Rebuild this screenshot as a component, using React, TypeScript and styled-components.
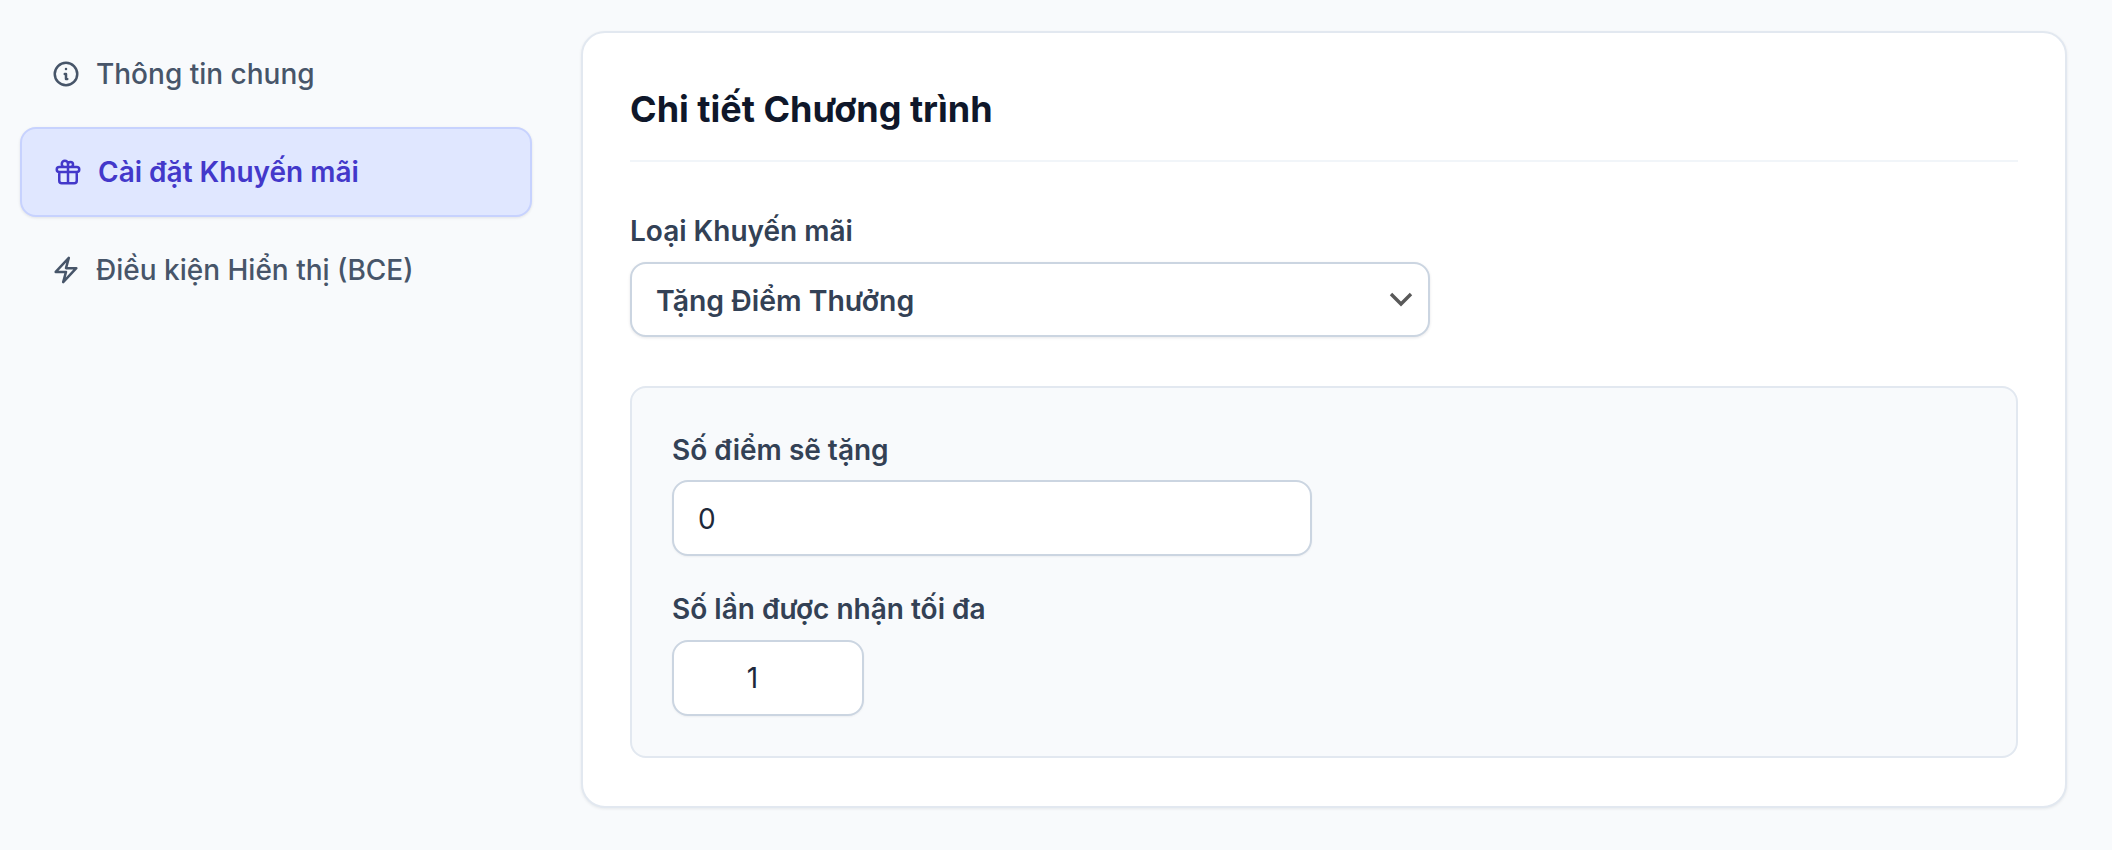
import React from "react"
import styled, { createGlobalStyle } from "styled-components"
import { HiOutlineInformationCircle, HiOutlineGift } from "react-icons/hi"
import { HiOutlineBolt } from "react-icons/hi2"

const GlobalStyle = createGlobalStyle`
    html, body {
        margin: 0;
        background-color: #f8fafc;
        font-family: Inter, "Noto Sans", sans-serif;
    }
`

const Page = styled.div`
    display: grid;
    grid-template-columns: 512px 1486px;
    column-gap: 49px;
    align-items: start;
    padding: 31px 0 0 20px;
    min-height: 819px;
`

const Sidebar = styled.nav`
    display: flex;
    flex-direction: column;
    gap: 8px;
    margin-top: -2px;
`

const NavItem = styled.a<{ $active?: boolean }>`
    display: flex;
    align-items: center;
    gap: 15px;
    height: 90px;
    box-sizing: border-box;
    padding: 0 31px;
    border-radius: 16px;
    font-size: 28px;
    font-weight: ${(p) => (p.$active ? 600 : 500)};
    color: ${(p) => (p.$active ? "#4338ca" : "#475569")};
    background-color: ${(p) => (p.$active ? "#e0e7ff" : "transparent")};
    border: ${(p) => (p.$active ? "2px solid #c7d2fe" : "none")};
    box-shadow: ${(p) => (p.$active ? "0 1px 3px rgba(15, 23, 42, 0.1)" : "none")};

    svg {
        flex-shrink: 0;
    }
`

const Card = styled.section`
    box-sizing: border-box;
    height: 777px;
    padding: 0 47px;
    background-color: #fff;
    border: 2px solid #e2e8f0;
    border-radius: 24px;
    box-shadow: 0 1px 3px rgba(15, 23, 42, 0.08);
`

const Title = styled.h2`
    margin: 0;
    padding: 55px 0 30px;
    font-size: 36px;
    line-height: 42px;
    font-weight: 700;
    color: #0f172a;
    border-bottom: 2px solid #f1f5f9;
`

const Field = styled.div`
    display: flex;
    flex-direction: column;
    align-items: flex-start;
`

const TopField = styled(Field)`
    margin-top: 49px;
`

const Label = styled.label<{ $tight?: boolean }>`
    font-size: 28px;
    line-height: 40px;
    font-weight: 600;
    color: #334155;
    margin-bottom: ${(p) => (p.$tight ? "10px" : "11px")};
`

const SelectWrap = styled.div`
    position: relative;
    width: 800px;
    height: 75px;

    svg {
        position: absolute;
        top: 26px;
        right: 17px;
        pointer-events: none;
    }
`

const Select = styled.select`
    appearance: none;
    box-sizing: border-box;
    width: 100%;
    height: 100%;
    padding: 2px 24px 0;
    font-family: inherit;
    font-size: 28.4px;
    font-weight: 600;
    color: #334155;
    background-color: #fff;
    border: 2px solid #cbd5e1;
    border-radius: 16px;
    box-shadow: 0 1px 3px rgba(15, 23, 42, 0.1);
`

const Panel = styled.div`
    display: flex;
    flex-direction: column;
    gap: 33px;
    margin-top: 49px;
    padding: 42px 40px 40px;
    background-color: #f8fafc;
    border: 2px solid #e2e8f0;
    border-radius: 16px;
`

const NumberInput = styled.input<{ $wide?: boolean }>`
    box-sizing: border-box;
    width: ${(p) => (p.$wide ? "640px" : "192px")};
    height: 76px;
    padding: ${(p) => (p.$wide ? "2px 24px 0" : "0 40px 0 24px")};
    font-family: inherit;
    font-size: 28px;
    color: #1e293b;
    text-align: ${(p) => (p.$wide ? "left" : "center")};
    background-color: #fff;
    border: 2px solid #cbd5e1;
    border-radius: 16px;
    box-shadow: 0 1px 2px rgba(15, 23, 42, 0.05);
`

const App = () => {
    return (
        <Page>
            <GlobalStyle />
            <Sidebar>
                <NavItem>
                    <HiOutlineInformationCircle size={30} />
                    Thông tin chung
                </NavItem>
                <NavItem $active>
                    <HiOutlineGift size={30} />
                    Cài đặt Khuyến mãi
                </NavItem>
                <NavItem>
                    <HiOutlineBolt size={30} strokeWidth={2} />
                    Điều kiện Hiển thị (BCE)
                </NavItem>
            </Sidebar>
            <Card>
                <Title>Chi tiết Chương trình</Title>
                <TopField>
                    <Label>Loại Khuyến mãi</Label>
                    <SelectWrap>
                        <Select defaultValue="points">
                            <option value="points">Tặng Điểm Thưởng</option>
                        </Select>
                        <svg width="24" height="24" viewBox="0 0 24 24" fill="none" stroke="#595959" strokeWidth="3.4">
                            <path d="M2 6l10 10 10-10" />
                        </svg>
                    </SelectWrap>
                </TopField>
                <Panel>
                    <Field>
                        <Label $tight>Số điểm sẽ tặng</Label>
                        <NumberInput $wide type="number" defaultValue={0} />
                    </Field>
                    <Field>
                        <Label>Số lần được nhận tối đa</Label>
                        <NumberInput type="number" defaultValue={1} />
                    </Field>
                </Panel>
            </Card>
        </Page>
    )
}

export default App
